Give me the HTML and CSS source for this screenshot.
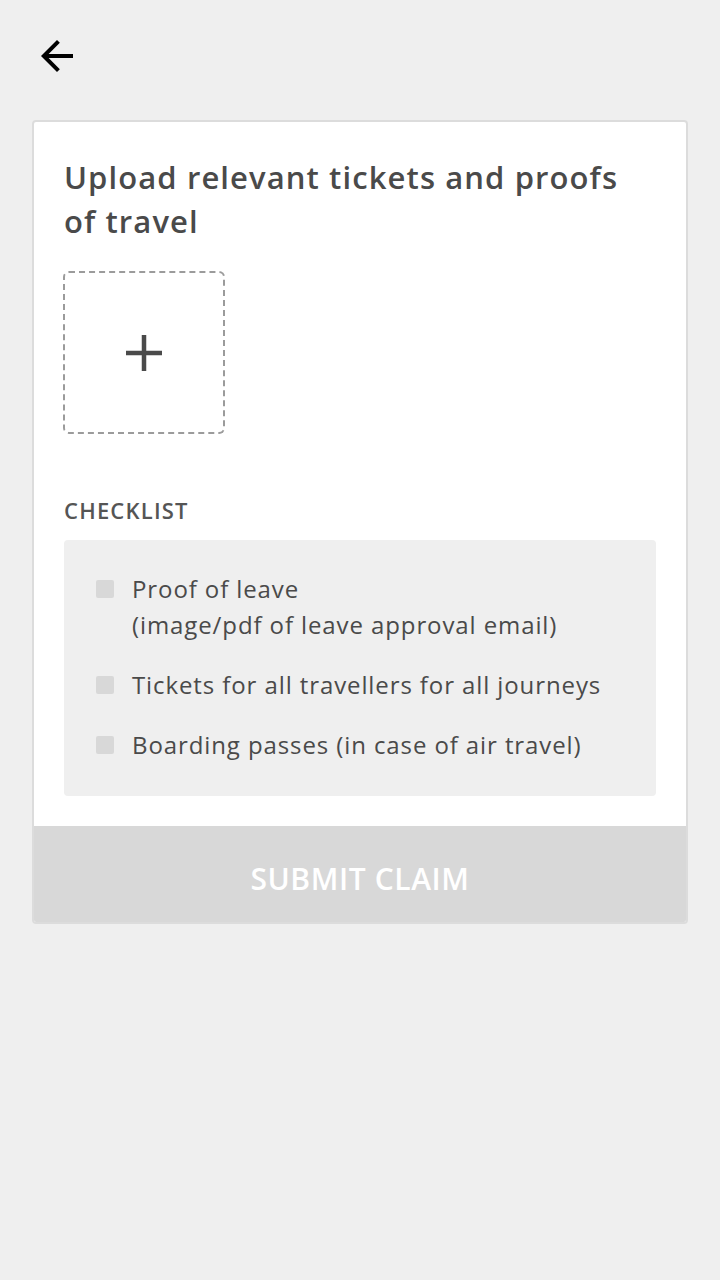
FILE: index.html
```html
<!DOCTYPE html>
<html lang="en">
<head>
    <meta charset="UTF-8" />
    <meta name="viewport" content="width=device-width, initial-scale=1" />
    <title>Upload proofs of travel</title>
    <link rel="stylesheet" href="styles.css">
</head>
<body>

<header class="topbar">
    <button class="back" aria-label="Back">
        <svg width="48" height="48" viewBox="0 0 24 24"><path d="M20 11H7.83l5.59-5.59L12 4l-8 8 8 8 1.41-1.41L7.83 13H20v-2z" fill="#000"/></svg>
    </button>
</header>

<main class="card">
    <div class="card-body">
        <h1 class="title">Upload relevant tickets and proofs of travel</h1>

        <button class="upload" aria-label="Add file">
            <svg width="40" height="40" viewBox="0 0 40 40"><path d="M20 2v36M2 20h36" stroke="#4a4a4a" stroke-width="4.5"/></svg>
        </button>

        <h2 class="label">CHECKLIST</h2>
        <ul class="checklist">
            <li><span class="box"></span><span>Proof of leave<br>(image/pdf of leave approval email)</span></li>
            <li><span class="box"></span><span>Tickets for all travellers for all journeys</span></li>
            <li><span class="box"></span><span>Boarding passes (in case of air travel)</span></li>
        </ul>
    </div>
    <button class="submit" disabled>SUBMIT CLAIM</button>
</main>

</body>
</html>
```

FILE: styles.css
```css
body {
    margin: 0;
    background-color: #efefef;
    font-family: "Open Sans", Lato, sans-serif;
    color: #4a4a4a;
}
.topbar {
    height: 120px;
    padding: 32px 0 0 33px;
    box-sizing: border-box;
}
.back {
    display: block;
    padding: 0;
    border: none;
    background: none;
    width: 48px;
    height: 48px;
}
.card {
    margin: 0 32px;
    background-color: #fff;
    border: 2px solid #dcdcdc;
    border-radius: 4px;
    overflow: hidden;
}
.card-body {
    padding: 33px 30px 30px 30px;
}
.title {
    margin: 0;
    max-width: 570px;
    font-size: 31px;
    line-height: 44px;
    font-weight: 600;
    letter-spacing: 1.1px;
    color: #4a4a4a;
}
.upload {
    display: flex;
    align-items: center;
    justify-content: center;
    margin: 28px 0 0 -1px;
    width: 162px;
    height: 163px;
    border: 2px dashed #9b9b9b;
    border-radius: 6px;
    background: #fff;
    padding: 0;
}
.label {
    margin: 62px 0 16px 0;
    font-size: 22px;
    line-height: 28px;
    font-weight: 600;
    letter-spacing: 1.2px;
    color: #555;
}
.checklist {
    list-style: none;
    margin: 0;
    padding: 31px 32px 33px 32px;
    background-color: #efefef;
    border-radius: 4px;
}
.checklist li {
    display: flex;
    gap: 18px;
    font-size: 24px;
    line-height: 36px;
    letter-spacing: 0.9px;
}
.checklist li + li {
    margin-top: 24px;
}
.box {
    flex: none;
    width: 18px;
    height: 18px;
    margin-top: 9px;
    background-color: #d8d8d8;
    border-radius: 2px;
}
.submit {
    display: block;
    width: 100%;
    height: 96px;
    padding: 8px 0 0 0;
    border: none;
    background-color: #d8d8d8;
    color: #fff;
    font-family: "Open Sans", Lato, sans-serif;
    font-size: 30px;
    font-weight: 600;
    letter-spacing: 0.6px;
}
```
